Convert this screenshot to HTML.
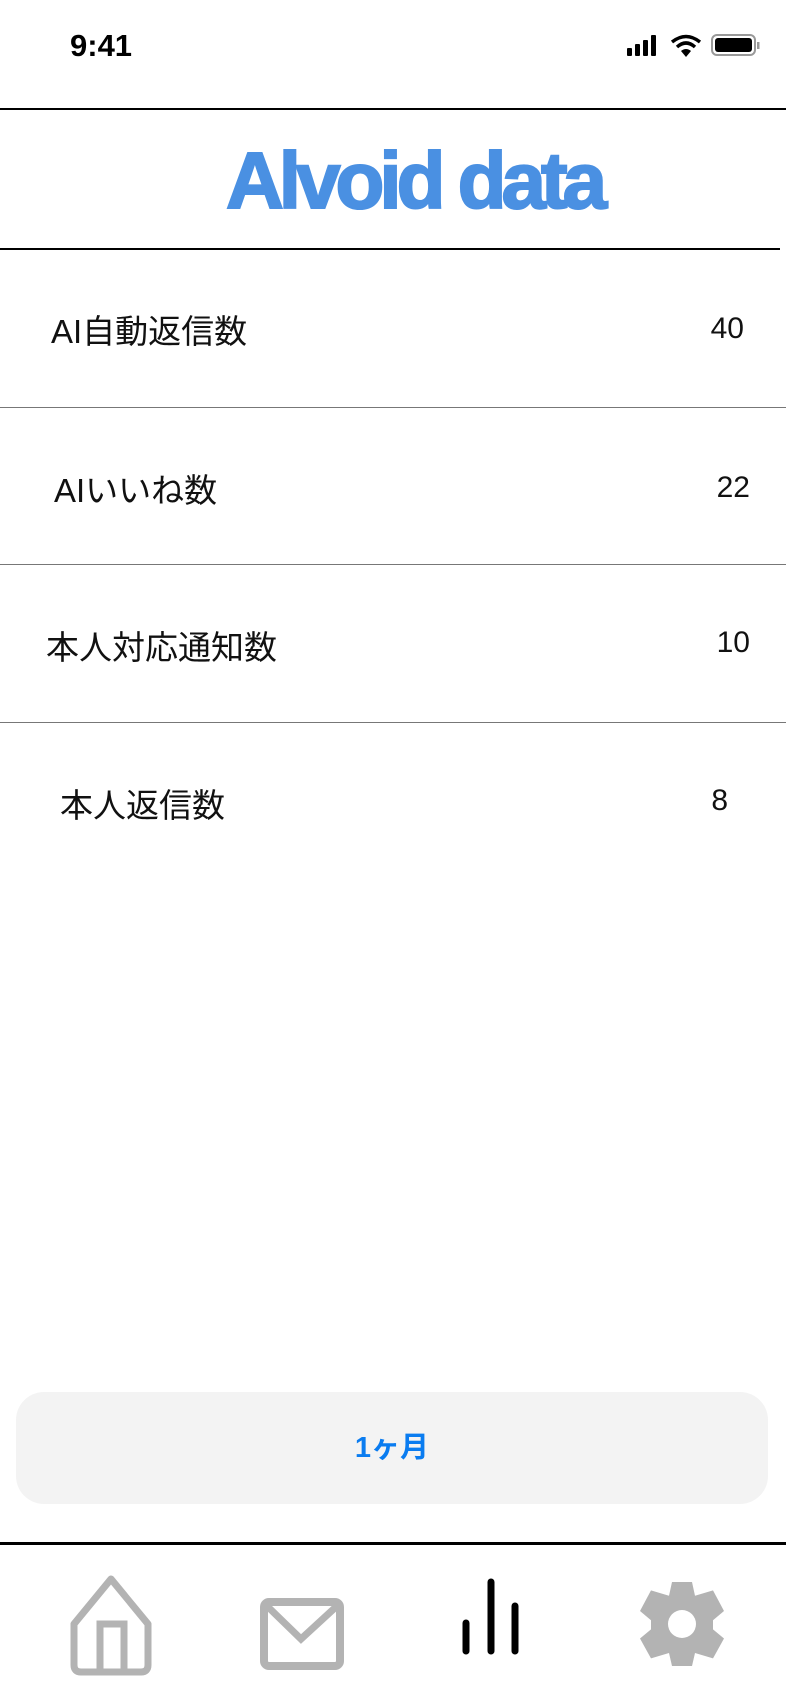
<!DOCTYPE html>
<html><head><meta charset="utf-8"><style>
body{margin:0;width:786px;height:1704px;background:#fff;position:relative;overflow:hidden;font-family:"Liberation Sans","Noto Sans CJK JP",sans-serif}
.a{position:absolute}
.hr{position:absolute;left:0;height:2px;background:#000}
.sep{position:absolute;left:0;width:786px;height:1px;background:#777}
.lab{position:absolute;font-size:33px;color:#111;transform:translateY(-50%)}
.num{position:absolute;font-size:30px;color:#111;transform:translateY(-50%);text-align:right}
</style></head><body>
<div class="a" style="left:70px;top:28px;font-size:31px;font-weight:bold">9:41</div>
<svg class="a" style="left:624px;top:32px" width="136" height="28">
<rect x="3" y="16" width="5" height="8" rx="1"/><rect x="11" y="12" width="5" height="12" rx="1"/><rect x="19" y="8" width="5" height="16" rx="1"/><rect x="27" y="3" width="5" height="21" rx="1"/>
<path d="M48 10 Q62 -1 76 10" stroke="#000" stroke-width="3.5" fill="none"/><path d="M53 15 Q62 7 71 15" stroke="#000" stroke-width="3.5" fill="none"/><path d="M57 19 L62 25 L67 19 Q62 15 57 19Z"/>
<rect x="88" y="3" width="43" height="20" rx="5" fill="none" stroke="#999" stroke-width="2"/><rect x="91" y="6" width="37" height="14" rx="3"/><rect x="133" y="10" width="2.5" height="7" fill="#999"/>
</svg>
<div class="hr" style="top:108px;width:786px"></div>
<div class="a" style="left:226px;top:136px;font-size:80px;font-weight:bold;color:#4a90e2;letter-spacing:-5px;line-height:90px;-webkit-text-stroke:2px #4a90e2">Alvoid data</div>
<div class="hr" style="top:248px;width:780px"></div>
<div class="lab" style="left:51px;top:329px">AI自動返信数</div><div class="num" style="right:42px;top:329px">40</div>
<div class="sep" style="top:407px"></div>
<div class="lab" style="left:54px;top:488px">AIいいね数</div><div class="num" style="right:36px;top:488px">22</div>
<div class="sep" style="top:564px"></div>
<div class="lab" style="left:46px;top:645px">本人対応通知数</div><div class="num" style="right:36px;top:643px">10</div>
<div class="sep" style="top:722px"></div>
<div class="lab" style="left:60px;top:803px">本人返信数</div><div class="num" style="right:58px;top:801px">8</div>
<div class="a" style="left:16px;top:1392px;width:752px;height:112px;border-radius:28px;background:#f3f3f3;text-align:center;line-height:112px;font-size:29px;font-weight:bold;color:#0a7cf0">1ヶ月</div>
<div class="hr" style="top:1542px;width:786px;height:3px"></div>
<svg class="a" style="left:0;top:1560px" width="786" height="144">
<path d="M111 19 L148 64 V105 Q148 112 141 112 H81 Q74 112 74 105 V64 Z" fill="none" stroke="#b3b3b3" stroke-width="7" stroke-linejoin="round"/>
<path d="M100 112 V64 H124 V112" fill="none" stroke="#b3b3b3" stroke-width="7"/>
<rect x="264" y="42" width="76" height="64" rx="5" fill="none" stroke="#b3b3b3" stroke-width="8"/>
<path d="M266 45 L301 79 L338 45" fill="none" stroke="#b3b3b3" stroke-width="7"/>
<g stroke="#000" stroke-width="7" stroke-linecap="round"><line x1="466" y1="63" x2="466" y2="91"/><line x1="491" y1="22" x2="491" y2="91"/><line x1="515" y1="46" x2="515" y2="91"/></g>
<g transform="translate(0,22) scale(1,0.764) translate(0,-22)">
<path d="M672 22 H692 L695 40 L713 33 L724 60 L713 72 V84 L724 96 L713 122 L695 115 L692 132 H672 L669 115 L651 122 L640 96 L651 84 V72 L640 60 L651 33 L669 40 Z" fill="#b3b3b3"/>
</g>
<circle cx="682" cy="64" r="14" fill="#fff"/>
</svg>
</body></html>
